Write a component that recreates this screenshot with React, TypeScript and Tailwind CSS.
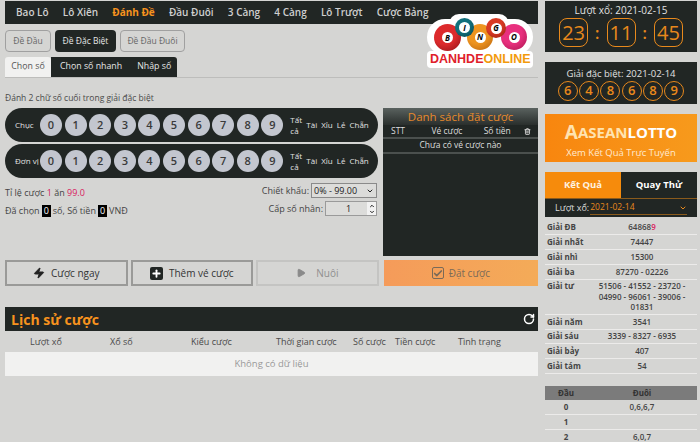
import { Zap, Play, RotateCw, ChevronDown, Trash2, Plus, Check, ChevronUp } from "lucide-react";

const nav = ["Bao Lô", "Lô Xiên", "Đánh Đề", "Đầu Đuôi", "3 Càng", "4 Càng", "Lô Trượt", "Cược Bảng"];
const digits = [0, 1, 2, 3, 4, 5, 6, 7, 8, 9];

function PickRow({ label }: { label: string }) {
  return (
    <div className="flex h-[34px] items-center rounded-[17px] bg-[#212624] pl-[10px] text-[#e2e2e2]">
      <span className="w-[25px] shrink-0 whitespace-nowrap text-[8px]">{label}</span>
      <div className="flex gap-[2.6px]">
        {digits.map((d) => (
          <span key={d} className="flex h-[22px] w-[22px] items-center justify-center rounded-full bg-[#c3c6cf] text-[11px] font-semibold text-[#3a3a3a]">
            {d}
          </span>
        ))}
      </div>
      <span className="ml-[7px] w-[14px] text-[8px] leading-[11px]">Tất cả</span>
      <div className="ml-[2px] flex gap-[4px] text-[8px] whitespace-nowrap">
        <span>Tài</span>
        <span>Xỉu</span>
        <span>Lẻ</span>
        <span>Chẵn</span>
      </div>
    </div>
  );
}

function ActionButton({ children, dim }: { children: React.ReactNode; dim?: boolean }) {
  return (
    <div className={`flex h-[26px] w-[123px] items-center justify-center gap-[6px] border-2 text-[10px] ${dim ? "border-[#c4c4c2] text-[#8f8f8f]" : "border-[#9a9a98] text-[#333]"}`}>
      {children}
    </div>
  );
}

function Logo() {
  const balls = [
    { l: "N", x: 40, y: 11, s: 26, c: "#ee9420", d: "#b5620e" },
    { l: "B", x: 7, y: 11, s: 27, c: "#dc2a2c", d: "#8e1216" },
    { l: "O", x: 74, y: 11, s: 26, c: "#e8307e", d: "#a8144e" },
    { l: "I", x: 28, y: 5, s: 19, c: "#12707c", d: "#0a3f48" },
    { l: "G", x: 59, y: 5, s: 20, c: "#d83a24", d: "#8e1e10" },
  ];
  return (
    <div className="absolute left-[427px] top-[13px] h-[56px] w-[106px]" aria-label="logo">
      <div className="absolute left-[0px] top-[6px] h-[36px] w-[106px] rounded-[18px] bg-white" />
      <div className="absolute left-[22px] top-[1px] h-[20px] w-[60px] rounded-[10px] bg-white" />
      <div className="absolute left-[0px] top-[38px] h-[17px] w-[106px] rounded-[4px] bg-white" />
      {balls.map((b) => (
        <div
          key={b.l}
          className="absolute flex items-center justify-center rounded-full"
          style={{ left: b.x, top: b.y, width: b.s, height: b.s, background: `radial-gradient(circle at 40% 35%, ${b.c} 45%, ${b.d} 100%)` }}
        >
          <span className="flex h-[11px] w-[11px] items-center justify-center rounded-full bg-white text-[8px] font-bold italic text-black">{b.l}</span>
        </div>
      ))}
      <div className="absolute left-[3px] top-[39px] flex h-[15px] items-center whitespace-nowrap font-['Liberation_Sans'] text-[12.5px] font-bold">
        <span className="text-[#e0202a]">DANHDE</span>
        <span className="text-[#f29a0c]">ONLINE</span>
      </div>
    </div>
  );
}

function Result({ name, children, h }: { name: string; children: React.ReactNode; h: string }) {
  return (
    <div className={`flex items-center border-b border-[#ecebea] ${h}`}>
      <span className="w-[42px] shrink-0 pl-[2px] font-bold">{name}</span>
      <span className="flex-1 text-center leading-[10.5px]">{children}</span>
    </div>
  );
}

export default function App() {
  return (
    <div className="relative flex h-[442px] w-[700px] items-start gap-[7px] overflow-hidden bg-[#d5d5d3] pl-[5px] pt-px font-['Open_Sans',sans-serif] text-[#444]">
      <div className="flex w-[533px] shrink-0 flex-col">
        {/* nav */}
        <div className="flex h-[23px] items-center gap-[14.2px] bg-[#212624] pl-[11px] text-[10px] font-semibold text-[#cfcfcf]">
          {nav.map((n) => (
            <span key={n} className={n === "Đánh Đề" ? "font-bold text-[#f7931e]" : ""}>{n}</span>
          ))}
        </div>

        {/* type buttons */}
        <div className="mt-[6px] flex gap-[4px] text-[8.5px]">
          <span className="flex h-[22px] w-[46px] items-center justify-center rounded-[4px] border border-[#a0a0a0] text-[#666]">Đề Đầu</span>
          <span className="flex h-[22px] w-[61px] items-center justify-center rounded-[4px] bg-[#212624] text-[#e6e6e6]">Đề Đặc Biệt</span>
          <span className="flex h-[22px] w-[65px] items-center justify-center rounded-[4px] border border-[#a0a0a0] text-[#666]">Đề Đầu Đuôi</span>
        </div>

        {/* tabs */}
        <div className="mt-[5px] flex h-[21px] border-b border-[#bdbdbb] text-[8.8px]">
          <span className="flex w-[46px] items-center justify-center rounded-t-[3px] bg-[#f1f1f0] text-[#555]">Chọn số</span>
          <div className="flex items-center gap-[15px] rounded-tr-[3px] bg-[#212624] pl-[9px] pr-[6px] text-[#e6e6e6]">
            <span>Chọn số nhanh</span>
            <span>Nhập số</span>
          </div>
        </div>

        <div className="mt-[14px] text-[8.5px] leading-[12px] text-[#4a4a4a]">Đánh 2 chữ số cuối trong giải đặc biệt</div>

        {/* picker + list */}
        <div className="mt-[4px] flex gap-[5px]">
          <div className="flex w-[373px] shrink-0 flex-col">
            <div className="flex flex-col gap-[2px]">
              <PickRow label="Chục" />
              <PickRow label="Đơn vị" />
            </div>
            <div className="mt-[4px] flex justify-between text-[9px]">
              <div className="flex flex-col gap-[6px] pt-[5px]">
                <div className="leading-[12px]">Tỉ lệ cược <span className="text-[#d81b60]">1</span> ăn <span className="text-[#d81b60]">99.0</span></div>
                <div className="flex items-center gap-[2px] leading-[12px]">
                  Đã chọn <span className="bg-black px-[2px] text-white">0</span> số, Số tiền <span className="bg-black px-[2px] text-white">0</span> VNĐ
                </div>
              </div>
              <div className="flex flex-col items-end gap-[3px] pr-[1px] pt-[1px] text-[9px]">
                <div className="flex items-center gap-[2px]">
                  Chiết khấu:
                  <span className="flex h-[15px] w-[66px] items-center justify-between border border-[#8a8a8a] bg-[#dcdcda] pl-[2px] pr-[2px] text-[#222]">
                    0% - 99.00 <ChevronDown size={8} strokeWidth={3} />
                  </span>
                </div>
                <div className="flex items-center gap-[2px]">
                  Cấp số nhân:
                  <span className="flex h-[15px] w-[52px] items-center border border-[#9a9a9a] bg-[#dcdcda] text-[#222]">
                    <span className="flex-1 pl-[4px] text-center">1</span>
                    <span className="flex h-full w-[9px] flex-col items-center justify-center bg-[#f2f2f2]">
                      <ChevronUp size={6} strokeWidth={4} />
                      <ChevronDown size={6} strokeWidth={4} />
                    </span>
                  </span>
                </div>
              </div>
            </div>
          </div>

          <div className="flex h-[148px] w-[155px] shrink-0 flex-col bg-[#212624] text-[8.5px] text-[#ddd]">
            <div className="flex h-[17px] items-center justify-center bg-gradient-to-b from-[#5a625f] to-[#2a2f2d] text-[11.5px] text-[#e8892a]">Danh sách đặt cược</div>
            <div className="flex h-[14px] items-center border-b-2 border-[#4b504e] pl-[8px] pr-[7px]">
              <span className="w-[41px]">STT</span>
              <span className="w-[53px]">Vé cược</span>
              <span className="w-[41px]">Số tiền</span>
              <Trash2 size={7} strokeWidth={3} />
            </div>
            <div className="flex h-[15px] items-center justify-center border-b-2 border-[#4b504e]">Chưa có vé cược nào</div>
          </div>
        </div>

        {/* actions */}
        <div className="mt-[4px] flex gap-[3px]">
          <ActionButton><Zap size={12} fill="#222" stroke="#222" /> Cược ngay</ActionButton>
          <ActionButton>
            <span className="flex h-[13px] w-[13px] items-center justify-center rounded-[2px] bg-[#212624]"><Plus size={11} strokeWidth={4} className="text-white" /></span>
            Thêm vé cược
          </ActionButton>
          <ActionButton dim><Play size={10} fill="#8a8a8a" stroke="#8a8a8a" className="mr-[4px]" /> Nuôi</ActionButton>
          <div className="ml-[2px] flex h-[26px] w-[155px] items-center justify-center gap-[5px] bg-gradient-to-r from-[#f59b5a] to-[#f4ab58] text-[10px] text-[#7a6a58]">
            <span className="flex h-[12px] w-[12px] items-center justify-center rounded-[2px] border border-[#7a6a58]"><Check size={11} strokeWidth={4} /></span>
            Đặt cược
          </div>
        </div>

        {/* history */}
        <div className="mt-[21px] flex h-[24px] items-center justify-between bg-[#212624] pl-[6px] pr-[3px]">
          <span className="text-[14px] font-bold text-[#f7931e]">Lịch sử cược</span>
          <RotateCw size={12} strokeWidth={3} className="text-white" />
        </div>
        <div className="flex h-[21px] items-center text-[9px] text-[#4a4a4a]">
          <span className="w-[80px] pl-[25px]">Lượt xổ</span>
          <span className="w-[85px] pl-[25px]">Xổ số</span>
          <span className="w-[88px] pl-[21px]">Kiểu cược</span>
          <span className="w-[95px] pl-[18px] whitespace-nowrap">Thời gian cược</span>
          <span className="w-[42px] whitespace-nowrap">Số cược</span>
          <span className="w-[63px] whitespace-nowrap">Tiền cược</span>
          <span className="whitespace-nowrap">Tình trạng</span>
        </div>
        <div className="flex h-[24px] items-center justify-center bg-[#f1f1f0] text-[9.5px] text-[#999]">Không có dữ liệu</div>
      </div>

      {/* sidebar */}
      <div className="flex w-[152px] shrink-0 flex-col text-[8px] text-[#444]">
        <div className="flex h-[51px] flex-col items-center bg-[#212624] pt-[3px] text-[#e2e2e2]">
          <div className="text-[10px] leading-[13px]">Lượt xổ: 2021-02-15</div>
          <div className="mt-[1px] flex items-center gap-[7px] text-[20px] leading-none text-[#e8891c]">
            <span className="flex h-[29px] w-[29px] items-center justify-center rounded-[8px] border border-[#e8891c]">23</span>
            <span className="text-[16px] font-semibold">:</span>
            <span className="flex h-[29px] w-[29px] items-center justify-center rounded-[8px] border border-[#e8891c]">11</span>
            <span className="text-[16px] font-semibold">:</span>
            <span className="flex h-[29px] w-[29px] items-center justify-center rounded-[8px] border border-[#e8891c]">45</span>
          </div>
        </div>

        <div className="mt-[10px] flex h-[42px] flex-col items-center bg-[#212624] pt-[6px] text-[#e2e2e2]">
          <div className="text-[9.5px] leading-[11px]">Giải đặc biệt: 2021-02-14</div>
          <div className="mt-[2px] flex gap-[1.3px]">
            {[6, 4, 8, 6, 8, 9].map((d, i) => (
              <span key={i} className="flex h-[20px] w-[20px] items-center justify-center rounded-full border border-[#e8891c] text-[13px] font-semibold text-[#e8891c]">{d}</span>
            ))}
          </div>
        </div>

        <div className="mt-[10px] flex h-[48px] flex-col items-center bg-gradient-to-r from-[#f8860e] to-[#f79a1c] pt-[9px] text-[#ffe9cf]">
          <div className="flex h-[18px] items-center text-[15px] font-bold leading-[18px] text-[#ffe3b0]">
            <span className="text-[19px] leading-[18px]">A</span>
            <span>ASEAN</span>
            <span className="text-white">LOTTO</span>
          </div>
          <div className="mt-[6px] text-[9.5px] leading-[12px]">Xem Kết Quả Trực Tuyến</div>
        </div>

        <div className="mt-[10px] flex h-[27px] border-b border-[#8a5a1c] text-[9.5px] font-bold">
          <span className="flex w-[76px] items-center justify-center bg-[#f68b0c] text-[#fff2e0]">Kết Quả</span>
          <span className="flex flex-1 items-center justify-center bg-[#212624] text-white">Quay Thử</span>
        </div>
        <div className="flex h-[18px] items-center bg-[#212624] pl-[10px] pr-[10px] text-[9px] text-[#ddd]">
          <span>Lượt xổ:</span>
          <span className="ml-[1px] flex flex-1 items-center justify-between border-b border-[#8a5a1c] text-[8.5px] text-[#e8891c]">
            2021-02-14 <ChevronDown size={8} strokeWidth={3} />
          </span>
        </div>

        <div className="mt-[3px] font-semibold leading-[10.5px]">
          <Result name="Giải ĐB" h="h-[15px]">64868<span className="text-[#d81b60]">9</span></Result>
          <Result name="Giải nhất" h="h-[15px]">74447</Result>
          <Result name="Giải nhì" h="h-[15px]">15300</Result>
          <Result name="Giải ba" h="h-[15px]">87270 - 02226</Result>
          <div className="flex h-[35px] border-b border-[#ecebea] pt-px">
            <span className="w-[42px] shrink-0 pl-[2px] font-bold">Giải tư</span>
            <span className="flex-1 text-center">51506 - 41552 - 23720 - 04990 - 96061 - 39006 - 01831</span>
          </div>
          <Result name="Giải năm" h="h-[14.7px]">3541</Result>
          <Result name="Giải sáu" h="h-[14.7px]">3339 - 8327 - 6935</Result>
          <Result name="Giải bảy" h="h-[14.7px]">407</Result>
          <Result name="Giải tám" h="h-[14.7px]">54</Result>
        </div>

        <div className="mt-[12px] flex h-[14px] items-center bg-[#7b7b7b] font-bold text-[#333]">
          <span className="w-[42px] text-center">Đầu</span>
          <span className="flex-1 text-center">Đuôi</span>
        </div>
        <div className="font-semibold">
          <div className="flex h-[15px] items-center border-b border-[#ecebea]"><span className="w-[42px] text-center font-bold">0</span><span className="flex-1 text-center">0,6,6,7</span></div>
          <div className="flex h-[15px] items-center border-b border-[#ecebea]"><span className="w-[42px] text-center font-bold">1</span><span className="flex-1 text-center"></span></div>
          <div className="flex h-[15px] items-center"><span className="w-[42px] text-center font-bold">2</span><span className="flex-1 text-center">6,0,7</span></div>
        </div>
      </div>

      <Logo />
    </div>
  );
}
